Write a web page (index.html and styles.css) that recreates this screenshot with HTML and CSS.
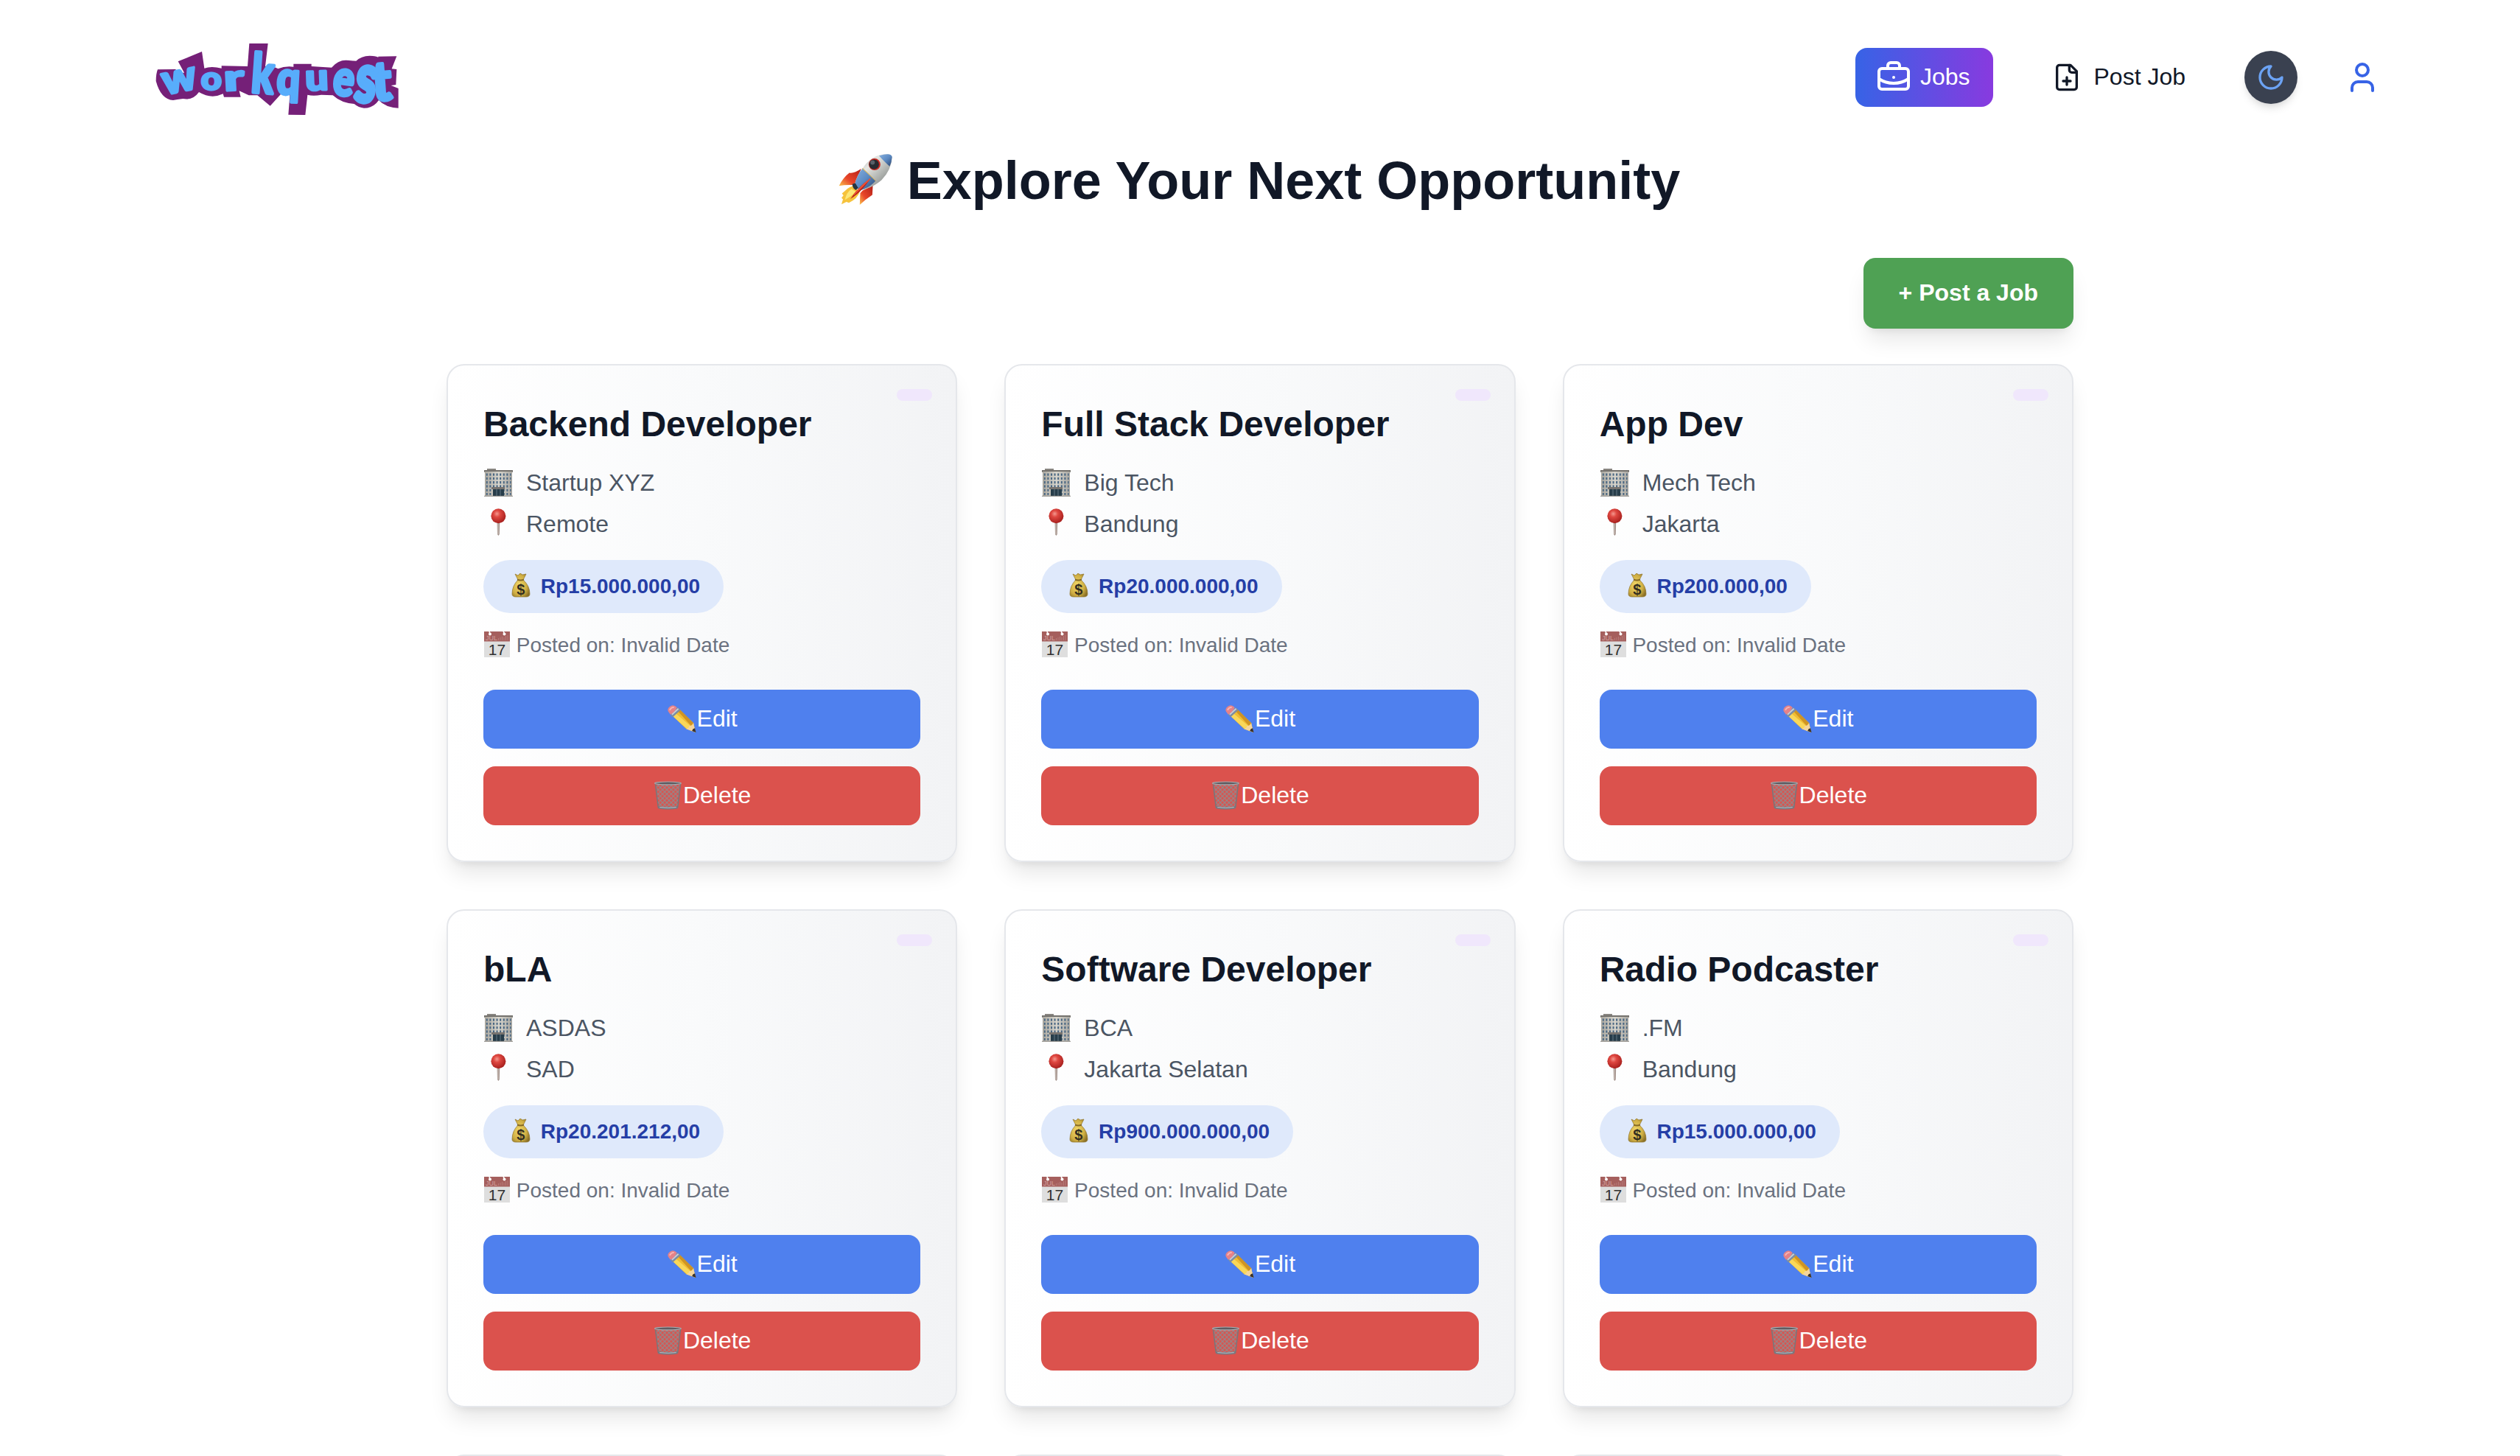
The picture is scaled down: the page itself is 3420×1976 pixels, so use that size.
FILE: index.html
```
<!DOCTYPE html>
<html lang="en">
<head>
<meta charset="utf-8">
<title>Workquest</title>
<link rel="stylesheet" href="styles.css">
</head>
<body>
<svg class="sprite" aria-hidden="true">
  <defs>
    <linearGradient id="steel" x1="0" y1="0" x2="1" y2="1"><stop offset="0" stop-color="#8d9699"/><stop offset=".35" stop-color="#e6e7e3"/><stop offset="1" stop-color="#686e6c"/></linearGradient>
    <linearGradient id="nose" x1="0" y1="0" x2="1" y2="1"><stop offset="0" stop-color="#86b0df"/><stop offset=".5" stop-color="#5d8bc4"/><stop offset="1" stop-color="#2a456f"/></linearGradient>
    <linearGradient id="fin" x1="1" y1="0" x2="0" y2="1"><stop offset="0" stop-color="#b31f17"/><stop offset=".6" stop-color="#e8452a"/><stop offset="1" stop-color="#fbc24a"/></linearGradient>
    <linearGradient id="wall" x1="0" y1="0" x2="1" y2="0"><stop offset="0" stop-color="#aaa79f"/><stop offset=".5" stop-color="#d9d6cd"/><stop offset="1" stop-color="#aaa8a2"/></linearGradient>
    <radialGradient id="ball" cx=".4" cy=".35" r=".65"><stop offset="0" stop-color="#f4978e"/><stop offset=".35" stop-color="#df4740"/><stop offset="1" stop-color="#a8201e"/></radialGradient>
    <radialGradient id="gold" cx=".4" cy=".5" r=".65"><stop offset="0" stop-color="#f2d869"/><stop offset=".65" stop-color="#cfae43"/><stop offset="1" stop-color="#8a7027"/></radialGradient>
    <pattern id="panes" width="4.6" height="5.3" patternUnits="userSpaceOnUse" x="2.8" y="6.5"><rect width="2" height="3.2" fill="#42617f"/></pattern>
    <pattern id="mesh" width="6" height="6" patternUnits="userSpaceOnUse"><path d="M0 0L6 6M6 0L0 6" stroke="#8f8c8f" stroke-width="1.2"/></pattern>
  </defs>
  <symbol id="rocket" viewBox="0 0 218 206">
    <path d="M92 60Q62 80 44 76Q18 96 2 129Q30 124 64 126Z" fill="url(#fin)"/>
    <path d="M139 128L137 166Q112 182 86 206L88 158L98 148Z" fill="url(#fin)"/>
    <path d="M58 130Q38 136 28 148L14 160L20 168L12 178L18 184L12 204L32 194L42 198Q78 180 86 152Z" fill="#f6c33c"/>
    <path d="M52 142Q32 156 26 186Q52 172 70 152Z" fill="#fce778"/>
    <path d="M98 58Q132 6 186 1Q214 -2 217 12Q214 66 174 106Q132 142 84 147L66 122Q76 82 98 58Z" fill="url(#steel)"/>
    <path d="M98 58L151 108Q122 140 84 147L66 122Q76 82 98 58Z" fill="url(#nose)"/>
    <path d="M164 7Q214-8 217 12Q216 32 207 50Q188 34 164 7Z" fill="url(#nose)"/>
    <path d="M97 58L151 109" stroke="#e2b955" stroke-width="3"/>
    <circle cx="146" cy="42" r="24" fill="#c92720"/><circle cx="144" cy="42" r="20" fill="#282b31"/><circle cx="138" cy="34" r="9" fill="#596068"/>
    <path d="M56 122L68 118L80 138L70 146Q56 140 56 122Z" fill="#263440"/>
    <path d="M129 100Q84 128 48 182Q94 154 129 100Z" fill="#b82018"/><path d="M129 100Q90 130 62 166Z" stroke="#ee5136" stroke-width="4"/>
  </symbol>
  <symbol id="building" viewBox="0 0 39 38">
    <path d="M4 0H16V3H4ZM0 2H39V5H0Z" fill="#898681"/><rect x="1" y="4" width="37" height="33" fill="url(#wall)"/><rect x="2.5" y="6" width="34" height="30" fill="url(#panes)"/><path d="M0 3H39" stroke="#5f5c58"/><path d="M10 25H28V28H10Z" fill="#77736f"/><path d="M12 28H27V37H12Z" fill="#273d4a"/><path d="M17 28V37M22 28V37" stroke="#647984"/><path d="M0 37.3H39" stroke="#8a8882"/>
  </symbol>
  <symbol id="pin" viewBox="0 0 39 38"><path d="M17.6 18H21.2L20.8 35L19.4 37L18 35Z" fill="#a08f88"/><path d="M19 20V35" stroke="#d3c8c1"/><circle cx="19.4" cy="10.3" r="10" fill="url(#ball)"/></symbol>
  <symbol id="bag" viewBox="0 60 26 33"><path transform="translate(0 60)" d="M5 1L9 3L12 0L15 2L20 1L16 9Q25 17 25 28Q25 32 20 32H6Q1 32 1 28Q1 17 9 9Z" fill="url(#gold)" stroke="#927629" stroke-width=".7"/><path d="M8 68.5Q12.500 70.500 17 68.500" stroke="#866a26" stroke-width="2" fill="none"/><text x="12.800" y="88.500" class="bag-sign">$</text></symbol>
  <symbol id="calendar" viewBox="0 0 35 35"><rect width="35" height="35" fill="#dedede"/><rect width="35" height="13.500" fill="#a55f5d"/><path d="M7 0L8 3M26 0L28 3" stroke="#fff" stroke-width="1.500"/><circle cx="8" cy="3.500" r="2" fill="#fff"/><circle cx="27.500" cy="3.500" r="2" fill="#fff"/><path d="M19.500 9V12M22 8V12M24.500 7V12M27 8V12M29.500 6V12M32 5V12" stroke="#b77a78"/><text x="2" y="12" class="cal-month">JUL</text><text x="17.500" y="31.500" class="cal-day">17</text></symbol>
  <symbol id="pencil" viewBox="0 0 40 38"><path d="M5 13L15 5L36 25L39 38L26 33Z" fill="#f0bd34"/><path d="M8 16L12 12L32 29L28 34Z" fill="#f9d75a"/><path d="M13 7L16 5L36 25L33 29Z" fill="#cf9424"/><path d="M26 33Q30 32 30 29Q34 29 36 25L39 38Z" fill="#f4d59c"/><path d="M35.500 33L38 32L39.500 38L34 36Z" fill="#38302c"/><path d="M4 13L14 3L18 7L7 17Z" fill="#7c8ca4"/><path d="M6 13L15 5" stroke="#c5ced9" stroke-width="2"/><path d="M1 9Q-1 5 3 2Q8-2 13 3Q10 10 4 13Z" fill="#e58288"/><path d="M3 7Q5 3 9 3" stroke="#f7b5b5" stroke-width="2" fill="none"/></symbol>
  <symbol id="bin" viewBox="0 0 39 40"><path d="M2 4H37L33 37Q19 41 6 37Z" fill="url(#mesh)"/><path d="M2 4L6 37M37 4L33 37" stroke="#77767a" stroke-width="1.500"/><ellipse cx="19.500" cy="3" rx="18.500" ry="2" fill="#5f5c61" stroke="#a9aaae" stroke-width="1.200"/><path d="M6 36.500Q19.500 39 33 36.500" stroke="#777980" stroke-width="3.500" fill="none"/><path d="M8 36.500Q19.500 38 31 36.500" stroke="#b9c0c8" fill="none"/></symbol>
</svg>

<div class="page">
  <header class="header">
    <a class="logo" aria-label="workquest">
      <svg viewBox="0 0 1140 390">
        <path class="logo-back" d="M72 163L146 162L144 178L180 176L155 130L252 90L262 158Q290 148 332 158V148L438 150L445 57H521L510 150Q545 148 562 160Q590 148 625 152V140H698V150L780 155Q810 120 850 126Q868 128 880 128Q900 108 935 107Q955 107 970 113V110L1045 109L1025 160L1045 162L1042 225L1022 228L1052 240V320Q1000 318 972 288Q950 320 912 320Q890 318 872 303Q820 300 785 268L738 266Q705 272 682 266L673 348L604 347L610 268L575 262L530 311L478 268H443L404 250L410 275H342L338 262Q290 285 240 255Q215 290 175 282Q150 285 135 288Q85 285 65 210Q65 180 72 163Z"/>
        <g class="logo-letters">
          <text transform="translate(102 266) rotate(-12) scale(1.24 1.2)">w</text>
          <text transform="translate(248 247) scale(1.06 .95)">o</text>
          <text transform="translate(344 250) rotate(-3) scale(1.55 1.06)">r</text>
          <text transform="translate(450 255) rotate(4) scale(1.2 1.6)">k</text>
          <text transform="translate(554 262) rotate(3) scale(1.2 1.35)">q</text>
          <text transform="translate(674 248) rotate(-2) scale(1.2 1.08)">u</text>
          <text transform="translate(780 262) rotate(8) scale(1.15 1.45)">e</text>
          <text transform="translate(868 288) rotate(8) scale(1.4 2)">s</text>
          <text transform="translate(950 290) rotate(-4) scale(1.5 1.6)">t</text>
        </g>
      </svg>
    </a>
    <nav class="nav">
      <a class="nav-link nav-link--active">
        <svg class="icon" viewBox="0 0 24 24"><path d="M12 12h.01M16 6V4a2 2 0 0 0-2-2h-4a2 2 0 0 0-2 2v2M22 13a18.150 18.150 0 0 1-20 0"/><rect x="2" y="6" width="20" height="14" rx="2"/></svg>
        <span>Jobs</span>
      </a>
      <a class="nav-link">
        <svg class="icon" viewBox="0 0 24 24"><path d="M15 2H6a2 2 0 0 0-2 2v16a2 2 0 0 0 2 2h12a2 2 0 0 0 2-2V7Z"/><path d="M14 2v4a2 2 0 0 0 2 2h4M9 15h6M12 18v-6"/></svg>
        <span>Post Job</span>
      </a>
      <button class="theme" aria-label="Toggle theme"><svg class="icon" viewBox="0 0 24 24"><path d="M12 3a6 6 0 0 0 9 9 9 9 0 1 1-9-9Z"/></svg></button>
      <a class="user" aria-label="Profile"><svg class="icon" viewBox="0 0 24 24"><path d="M19 21v-2a4 4 0 0 0-4-4H9a4 4 0 0 0-4 4v2"/><circle cx="12" cy="7" r="4"/></svg></a>
    </nav>
  </header>

  <main class="main">
    <h1 class="heading"><svg class="rocket"><use href="#rocket"/></svg> Explore Your Next Opportunity</h1>
    <div class="toolbar"><button class="post-btn">+ Post a Job</button></div>
    <section class="grid">
      <article class="card"><span class="badge"></span><h2>Backend Developer</h2>
        <p class="row"><svg class="emoji"><use href="#building"/></svg>Startup XYZ</p>
        <p class="row"><svg class="emoji"><use href="#pin"/></svg>Remote</p>
        <p class="pay"><svg class="emoji"><use href="#bag"/></svg> Rp15.000.000,00</p>
        <p class="date"><svg class="emoji"><use href="#calendar"/></svg> Posted on: Invalid Date</p>
        <button class="btn btn--edit"><svg class="emoji"><use href="#pencil"/></svg>Edit</button>
        <button class="btn btn--delete"><svg class="emoji"><use href="#bin"/></svg>Delete</button></article>
      <article class="card"><span class="badge"></span><h2>Full Stack Developer</h2>
        <p class="row"><svg class="emoji"><use href="#building"/></svg>Big Tech</p>
        <p class="row"><svg class="emoji"><use href="#pin"/></svg>Bandung</p>
        <p class="pay"><svg class="emoji"><use href="#bag"/></svg> Rp20.000.000,00</p>
        <p class="date"><svg class="emoji"><use href="#calendar"/></svg> Posted on: Invalid Date</p>
        <button class="btn btn--edit"><svg class="emoji"><use href="#pencil"/></svg>Edit</button>
        <button class="btn btn--delete"><svg class="emoji"><use href="#bin"/></svg>Delete</button></article>
      <article class="card"><span class="badge"></span><h2>App Dev</h2>
        <p class="row"><svg class="emoji"><use href="#building"/></svg>Mech Tech</p>
        <p class="row"><svg class="emoji"><use href="#pin"/></svg>Jakarta</p>
        <p class="pay"><svg class="emoji"><use href="#bag"/></svg> Rp200.000,00</p>
        <p class="date"><svg class="emoji"><use href="#calendar"/></svg> Posted on: Invalid Date</p>
        <button class="btn btn--edit"><svg class="emoji"><use href="#pencil"/></svg>Edit</button>
        <button class="btn btn--delete"><svg class="emoji"><use href="#bin"/></svg>Delete</button></article>
      <article class="card"><span class="badge"></span><h2>bLA</h2>
        <p class="row"><svg class="emoji"><use href="#building"/></svg>ASDAS</p>
        <p class="row"><svg class="emoji"><use href="#pin"/></svg>SAD</p>
        <p class="pay"><svg class="emoji"><use href="#bag"/></svg> Rp20.201.212,00</p>
        <p class="date"><svg class="emoji"><use href="#calendar"/></svg> Posted on: Invalid Date</p>
        <button class="btn btn--edit"><svg class="emoji"><use href="#pencil"/></svg>Edit</button>
        <button class="btn btn--delete"><svg class="emoji"><use href="#bin"/></svg>Delete</button></article>
      <article class="card"><span class="badge"></span><h2>Software Developer</h2>
        <p class="row"><svg class="emoji"><use href="#building"/></svg>BCA</p>
        <p class="row"><svg class="emoji"><use href="#pin"/></svg>Jakarta Selatan</p>
        <p class="pay"><svg class="emoji"><use href="#bag"/></svg> Rp900.000.000,00</p>
        <p class="date"><svg class="emoji"><use href="#calendar"/></svg> Posted on: Invalid Date</p>
        <button class="btn btn--edit"><svg class="emoji"><use href="#pencil"/></svg>Edit</button>
        <button class="btn btn--delete"><svg class="emoji"><use href="#bin"/></svg>Delete</button></article>
      <article class="card"><span class="badge"></span><h2>Radio Podcaster</h2>
        <p class="row"><svg class="emoji"><use href="#building"/></svg>.FM</p>
        <p class="row"><svg class="emoji"><use href="#pin"/></svg>Bandung</p>
        <p class="pay"><svg class="emoji"><use href="#bag"/></svg> Rp15.000.000,00</p>
        <p class="date"><svg class="emoji"><use href="#calendar"/></svg> Posted on: Invalid Date</p>
        <button class="btn btn--edit"><svg class="emoji"><use href="#pencil"/></svg>Edit</button>
        <button class="btn btn--delete"><svg class="emoji"><use href="#bin"/></svg>Delete</button></article>
      <article class="card"></article><article class="card"></article><article class="card"></article>
    </section>
  </main>
</div>
</body>
</html>
```
FILE: styles.css
```
* { box-sizing: border-box; margin: 0; padding: 0; }
body { background: #fff; color: #111827; font: 32px/48px "Liberation Sans", Arial, sans-serif; }
button { border: 0; font: inherit; color: inherit; }
svg { flex: none; overflow: visible; }
.sprite { display: block; width: 0; height: 0; }
.page { height: 1976px; overflow: hidden; }

.header { display: flex; align-items: center; justify-content: space-between; padding: 40px 190px 0; }
.logo svg { display: block; width: 380px; height: 130px; }
.logo-back { fill: #752078; }
.logo-letters { font-family: Lato, sans-serif; font-size: 138px; font-weight: 900; fill: #58adfb; stroke: #58adfb; stroke-width: 9; stroke-linejoin: round; }
.nav { display: flex; align-items: center; gap: 48px; }
.nav-link { display: flex; align-items: center; gap: 16px; height: 80px; padding: 0 32px; border-radius: 16px; }
.nav-link span { padding-bottom: 2px; }
.nav-link--active { color: #fff; background: linear-gradient(to right, #3763e6, #883adf); }
.icon { display: block; width: 40px; height: 40px; fill: none; stroke: currentColor; stroke-width: 2; stroke-linecap: round; stroke-linejoin: round; }
.nav-link--active .icon { transform: scale(1.2); }
.theme { display: flex; align-items: center; justify-content: center; width: 72px; height: 72px; border-radius: 50%; background: #3a4150; color: #6ca3f4; box-shadow: 0 8px 12px -2px rgba(0,0,0,.1), 0 4px 8px -4px rgba(0,0,0,.1); }
.user { margin-left: 16px; color: #3763e6; }
.user .icon { width: 48px; height: 48px; }

.main { width: 2208px; margin: 0 auto; padding-top: 35px; }
.heading { text-align: center; font-size: 72px; line-height: 80px; font-weight: 700; }
.rocket { width: 73px; height: 69px; margin-left: -2px; vertical-align: -8px; }
.toolbar { display: flex; justify-content: flex-end; margin: 65px 0 48px; }
.post-btn { height: 96px; padding: 0 48px 2px; border-radius: 16px; background: #4fa154; color: #fff; font-weight: 700; box-shadow: 0 20px 30px -6px rgba(0,0,0,.1), 0 8px 12px -8px rgba(0,0,0,.1); }

.grid { display: grid; grid-template-columns: repeat(3, 1fr); gap: 64px; }
.card { position: relative; display: flex; flex-direction: column; align-items: flex-start; height: 676px; padding: 48px; border: 2px solid #e5e7eb; border-radius: 24px; background: linear-gradient(to right, #fff, #f9fafb 50%, #f2f3f5); box-shadow: 0 20px 30px -6px rgba(0,0,0,.1), 0 8px 12px -8px rgba(0,0,0,.1); }
.badge { position: absolute; top: 32px; right: 32px; width: 48px; height: 16px; border-radius: 8px; background: #f0e7fc; }
.card h2 { margin-bottom: 23px; font-size: 48px; line-height: 64px; font-weight: 700; }
.row { display: flex; align-items: center; gap: 18px; height: 48px; margin-bottom: 8px; color: #4b5563; }
.row .emoji { width: 39px; height: 38px; margin-left: 1px; }
.row + .row { margin-bottom: 25px; }
.row + .row .emoji { margin-top: -4px; }
.pay { height: 72px; padding: 16px 32px; border-radius: 36px; background: #dfe9fb; color: #253ea6; font-size: 28px; line-height: 40px; font-weight: 700; white-space: nowrap; }
.pay .emoji { width: 26px; height: 33px; margin: 0 6px; vertical-align: -6px; }
.date { height: 40px; margin: 24px 0 40px; color: #6b7280; font-size: 28px; line-height: 40px; white-space: nowrap; }
.date .emoji { width: 35px; height: 35px; margin: 0 1px; vertical-align: -7px; }
.btn { display: flex; align-items: center; justify-content: center; width: 100%; height: 80px; padding-bottom: 2px; border-radius: 16px; color: #fff; }
.btn--edit { margin-bottom: 24px; background: #4f80ee; }
.btn--delete { background: #db524d; }
.btn .emoji { width: 39px; height: 39px; margin: 0 1px; }
.bag-sign { font: 700 20px "Liberation Sans", Arial, sans-serif; text-anchor: middle; fill: #332e20; }
.cal-month { font: 9px "Liberation Sans", Arial, sans-serif; fill: #d2a09d; }
.cal-day { font: 21px "Liberation Sans", Arial, sans-serif; text-anchor: middle; fill: #303030; }
```
